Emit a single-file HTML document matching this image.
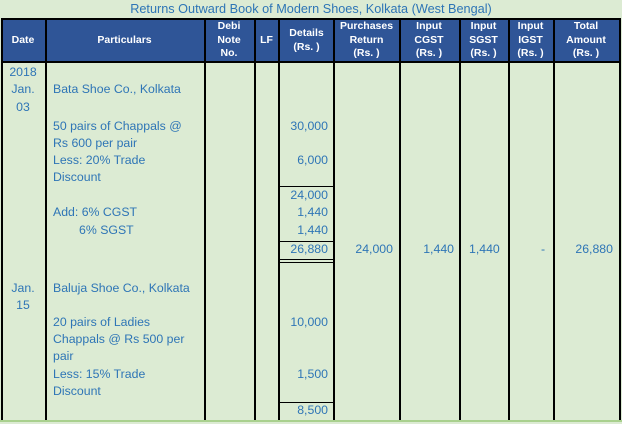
<!DOCTYPE html>
<html><head><style>
body{margin:0;width:622px;height:424px;background:#dcebd3;position:relative;overflow:hidden;font-family:"Liberation Sans",sans-serif;}
.t{position:absolute;color:#2e75b6;font-size:12.3px;line-height:17px;white-space:nowrap;}
.r{text-align:right;}
.v{position:absolute;background:#000;width:1.5px;}
.h{position:absolute;background:#000;height:1px;}
.hd{position:absolute;top:19px;height:43px;background:#2f5597;}
.hc{position:absolute;top:19px;height:43px;color:#fff;font-weight:bold;font-size:10.5px;line-height:13.5px;text-align:center;display:flex;align-items:center;justify-content:center;}
</style></head><body>
<div class="t" style="left:0;width:622px;top:1px;text-align:center;font-size:12.7px;">Returns Outward Book of Modern Shoes, Kolkata (West Bengal)</div>
<div class="hd" style="left:1px;width:619px;"></div>
<div class="h" style="left:1px;width:619px;top:18px;height:1.5px"></div>
<div class="h" style="left:1px;width:619px;top:61px;height:1.5px"></div>
<div class="hc" style="left:1px;width:44px">Date</div>
<div class="hc" style="left:45px;width:159px">Particulars</div>
<div class="hc" style="left:204px;width:50px">Debi<br>Note<br>No.</div>
<div class="hc" style="left:254px;width:25px">LF</div>
<div class="hc" style="left:279px;width:55px">Details<br>(Rs. )</div>
<div class="hc" style="left:334px;width:65px">Purchases<br>Return<br>(Rs. )</div>
<div class="hc" style="left:399px;width:60px">Input<br>CGST<br>(Rs. )</div>
<div class="hc" style="left:459px;width:49px">Input<br>SGST<br>(Rs. )</div>
<div class="hc" style="left:508px;width:45px">Input<br>IGST<br>(Rs. )</div>
<div class="hc" style="left:553px;width:66px">Total<br>Amount<br>(Rs. )</div>
<div class="v" style="left:1px;top:18px;height:402px"></div>
<div class="v" style="left:45px;top:18px;height:402px"></div>
<div class="v" style="left:204px;top:18px;height:402px"></div>
<div class="v" style="left:254px;top:18px;height:402px"></div>
<div class="v" style="left:278px;top:18px;height:402px"></div>
<div class="v" style="left:333px;top:18px;height:402px"></div>
<div class="v" style="left:399px;top:18px;height:402px"></div>
<div class="v" style="left:459px;top:18px;height:402px"></div>
<div class="v" style="left:508px;top:18px;height:402px"></div>
<div class="v" style="left:553px;top:18px;height:402px"></div>
<div class="v" style="left:619px;top:18px;height:402px"></div>
<div class="h" style="left:279px;width:55px;top:186px"></div>
<div class="h" style="left:279px;width:55px;top:241px"></div>
<div class="h" style="left:279px;width:55px;top:259px"></div>
<div class="h" style="left:279px;width:55px;top:262px"></div>
<div class="h" style="left:279px;width:55px;top:402px"></div>
<div class="h" style="left:0;width:622px;top:420px;height:2px;background:#a9d08e"></div>
<div class="t" style="left:1px;width:44px;text-align:center;top:64px">2018</div>
<div class="t" style="left:1px;width:44px;text-align:center;top:81px">Jan.</div>
<div class="t" style="left:1px;width:44px;text-align:center;top:99px">03</div>
<div class="t" style="left:53px;top:81px">Bata Shoe Co., Kolkata</div>
<div class="t" style="left:53px;top:118px">50 pairs of Chappals @</div>
<div class="t" style="left:53px;top:135px">Rs 600 per pair</div>
<div class="t" style="left:53px;top:152px">Less: 20% Trade</div>
<div class="t" style="left:53px;top:169px">Discount</div>
<div class="t" style="left:53px;top:204px">Add: 6% CGST</div>
<div class="t" style="left:79px;top:222px">6% SGST</div>
<div class="t r" style="left:279px;width:49px;top:118px">30,000</div>
<div class="t r" style="left:279px;width:49px;top:152px">6,000</div>
<div class="t r" style="left:279px;width:49px;top:187px">24,000</div>
<div class="t r" style="left:279px;width:49px;top:204px">1,440</div>
<div class="t r" style="left:279px;width:49px;top:222px">1,440</div>
<div class="t r" style="left:279px;width:49px;top:241px">26,880</div>
<div class="t r" style="left:334px;width:59px;top:241px">24,000</div>
<div class="t r" style="left:399px;width:55px;top:241px">1,440</div>
<div class="t" style="left:469px;top:241px">1,440</div>
<div class="t" style="left:541px;top:241px">-</div>
<div class="t r" style="left:553px;width:60px;top:241px">26,880</div>
<div class="t" style="left:1px;width:44px;text-align:center;top:280px">Jan.</div>
<div class="t" style="left:1px;width:44px;text-align:center;top:297px">15</div>
<div class="t" style="left:53px;top:280px">Baluja Shoe Co., Kolkata</div>
<div class="t" style="left:53px;top:314px">20 pairs of Ladies</div>
<div class="t" style="left:53px;top:331px">Chappals @ Rs 500 per</div>
<div class="t" style="left:53px;top:348px">pair</div>
<div class="t" style="left:53px;top:366px">Less: 15% Trade</div>
<div class="t" style="left:53px;top:383px">Discount</div>
<div class="t r" style="left:279px;width:49px;top:314px">10,000</div>
<div class="t r" style="left:279px;width:49px;top:366px">1,500</div>
<div class="t r" style="left:279px;width:49px;top:402px">8,500</div>
</body></html>
